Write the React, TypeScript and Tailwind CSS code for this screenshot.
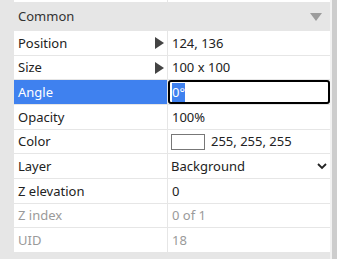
import React from 'react';

type Row = {
  label: string;
  value: string;
  arrow?: boolean;
  disabled?: boolean;
  kind?: 'text' | 'color' | 'select' | 'edit';
};

const rows: Row[] = [
  { label: 'Position', value: '124, 136', arrow: true },
  { label: 'Size', value: '100 x 100', arrow: true },
  { label: 'Angle', value: '0°', kind: 'edit' },
  { label: 'Opacity', value: '100%' },
  { label: 'Color', value: '255, 255, 255', kind: 'color' },
  { label: 'Layer', value: 'Background', kind: 'select' },
  { label: 'Z elevation', value: '0' },
  { label: 'Z index', value: '0 of 1', disabled: true },
  { label: 'UID', value: '18', disabled: true },
];

function PropRow({ row }: { row: Row }) {
  const active = row.kind === 'edit';
  const tone = row.disabled ? 'text-[#9a9a9a]' : 'text-[#222]';

  return (
    <div className="flex h-[24.67px] border-b border-[#e6e6e6] bg-white">
      <div
        className={`relative flex w-[154px] items-center border-r border-[#e6e6e6] pl-[4px] pt-[1px] ${
          active ? 'bg-[#3f81ef] text-white' : tone
        }`}
      >
        {row.label}
        {row.arrow && (
          <svg className="absolute left-[141px] top-[6px]" width="9" height="12" viewBox="0 0 9 12">
            <path d="M0 0 L9 6 L0 12 Z" fill="#444" />
          </svg>
        )}
      </div>
      <div className={`flex flex-1 items-center pt-[1px] ${tone}`}>
        {row.kind === 'edit' && (
          <div className="-mt-[1px] flex h-[calc(100%+1px)] w-full items-center rounded-[3px] border-2 border-black pl-[2px] pt-[1px]">
            <span className="bg-[#3f81ef] text-white">{row.value}</span>
          </div>
        )}
        {row.kind === 'color' && (
          <div className="flex items-center pl-[3px]">
            <span className="mr-[6px] h-[16px] w-[34px] border border-[#777] bg-white" />
            {row.value}
          </div>
        )}
        {row.kind === 'select' && (
          <div className="flex w-full items-center justify-between pl-[3px] pr-[3px]">
            {row.value}
            <svg width="10" height="7" viewBox="0 0 10 7">
              <path d="M1 1 L5 5 L9 1" stroke="#222" strokeWidth="1.8" fill="none" />
            </svg>
          </div>
        )}
        {(!row.kind || row.kind === 'text') && <span className="pl-[4px]">{row.value}</span>}
      </div>
    </div>
  );
}

export default function App() {
  return (
    <div
      className="flex h-[259px] w-[337px] overflow-hidden bg-[#e6e6e6] text-[13px]"
      style={{ fontFamily: '"Noto Sans", "Open Sans", sans-serif' }}
    >
      <div className="w-[14px] shrink-0" />
      <div className="flex w-[316px] flex-col">
        {/* tail of previous row */}
        <div className="flex h-[2px] bg-white">
          <div className="w-[154px] border-r border-[#e6e6e6]" />
        </div>

        {/* Section header */}
        <div className="flex h-[29px] items-center justify-between bg-[#e6e6e6] pl-[4px] pr-[8px] pt-[1px] text-[#333]">
          <span>Common</span>
          <svg width="12" height="8" viewBox="0 0 12 8">
            <path d="M0 0 L12 0 L6 8 Z" fill="#9c9c9c" />
          </svg>
        </div>

        {rows.map((r) => (
          <PropRow key={r.label} row={r} />
        ))}
      </div>
      <div className="w-[2px] shrink-0 bg-[#f2f2f2]" />
      <div className="w-[5px] shrink-0 bg-[#cdcdcd]" />
    </div>
  );
}
